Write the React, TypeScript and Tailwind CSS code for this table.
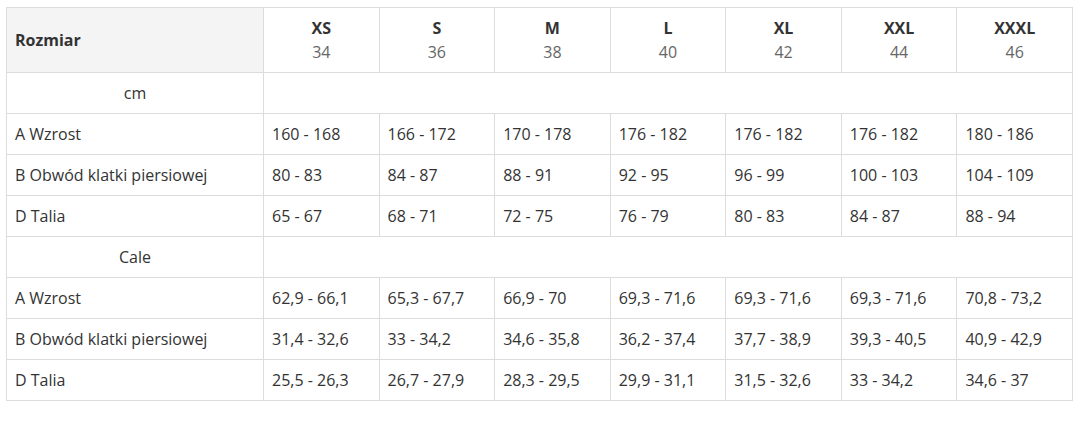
import React from "react";

const sizes = [
  ["XS", "34"],
  ["S", "36"],
  ["M", "38"],
  ["L", "40"],
  ["XL", "42"],
  ["XXL", "44"],
  ["XXXL", "46"],
];

const cm = [
  ["A Wzrost", ["160 - 168", "166 - 172", "170 - 178", "176 - 182", "176 - 182", "176 - 182", "180 - 186"]],
  ["B Obwód klatki piersiowej", ["80 - 83", "84 - 87", "88 - 91", "92 - 95", "96 - 99", "100 - 103", "104 - 109"]],
  ["D Talia", ["65 - 67", "68 - 71", "72 - 75", "76 - 79", "80 - 83", "84 - 87", "88 - 94"]],
] as const;

const inch = [
  ["A Wzrost", ["62,9 - 66,1", "65,3 - 67,7", "66,9 - 70", "69,3 - 71,6", "69,3 - 71,6", "69,3 - 71,6", "70,8 - 73,2"]],
  ["B Obwód klatki piersiowej", ["31,4 - 32,6", "33 - 34,2", "34,6 - 35,8", "36,2 - 37,4", "37,7 - 38,9", "39,3 - 40,5", "40,9 - 42,9"]],
  ["D Talia", ["25,5 - 26,3", "26,7 - 27,9", "28,3 - 29,5", "29,9 - 31,1", "31,5 - 32,6", "33 - 34,2", "34,6 - 37"]],
] as const;

function Section({ title, rows }: { title: string; rows: readonly (readonly [string, readonly string[]])[] }) {
  return (
    <>
      <tr className="h-[41px]">
        <td className="border border-[#dcdcdc] px-2 text-center">{title}</td>
        <td className="border border-[#dcdcdc]" colSpan={7}></td>
      </tr>
      {rows.map(([label, vals]) => (
        <tr key={title + label} className="h-[41px]">
          <td className="border border-[#dcdcdc] px-2">{label}</td>
          {vals.map((v, i) => (
            <td key={i} className="border border-[#dcdcdc] px-2">
              {v}
            </td>
          ))}
        </tr>
      ))}
    </>
  );
}

export default function App() {
  return (
    <div className="w-[1084px] h-[422px] bg-white pl-[6px] pt-[7px]" style={{ fontFamily: '"Open Sans", sans-serif' }}>
      <table className="table-fixed border-collapse w-[1067px] text-[16px] text-[#333]">
        <colgroup>
          <col className="w-[257px]" />
          <col />
          <col />
          <col />
          <col />
          <col />
          <col />
          <col />
        </colgroup>
        <thead>
          <tr className="h-[65px]">
            <th className="border border-[#dcdcdc] bg-[#f4f4f4] px-2 text-left font-bold">Rozmiar</th>
            {sizes.map(([s, n]) => (
              <th key={s} className="border border-[#dcdcdc] px-2 text-center leading-[24px]">
                <div className="font-bold text-[#333]">{s}</div>
                <div className="font-normal text-[#666]">{n}</div>
              </th>
            ))}
          </tr>
        </thead>
        <tbody>
          <Section title="cm" rows={cm} />
          <Section title="Cale" rows={inch} />
        </tbody>
      </table>
    </div>
  );
}
